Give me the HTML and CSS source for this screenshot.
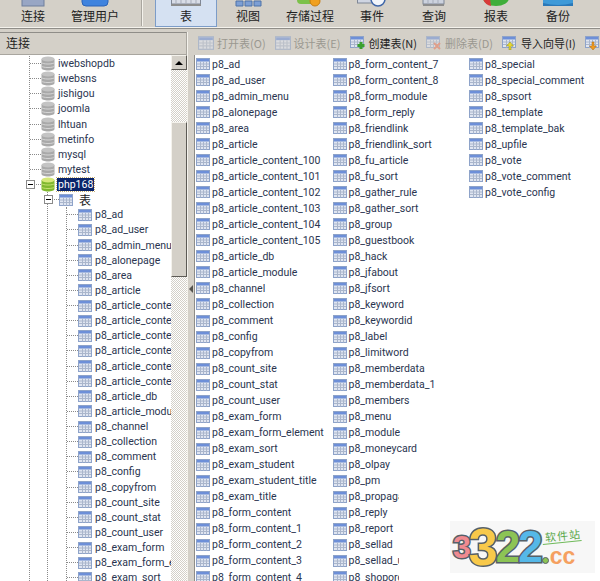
FILE: index.html
```html
<!DOCTYPE html>
<html lang="zh">
<head>
<meta charset="utf-8">
<title>Navicat</title>
<link rel="stylesheet" href="styles.css">
</head>
<body>
<svg class="defs" width="0" height="0">
  <symbol id="tbl" viewBox="0 0 14 12">
    <rect x="0.5" y="0.5" width="13" height="11" fill="#dfe5f1" stroke="#8ea3c9"/>
    <rect x="1" y="1" width="12" height="2.5" fill="#6d8fd8"/>
    <path d="M1 6h12M1 8.500h12M4.500 3.500v8M7.500 3.500v8M10.500 3.500v8" stroke="#aab6cc" stroke-width="1" fill="none"/>
  </symbol>
  <symbol id="db" viewBox="0 0 14 15">
    <path d="M0.500 3v9c0 1.500 3 2.500 6.500 2.500s6.500-1 6.500-2.500V3z" fill="#a9a9a9"/>
    <ellipse cx="7" cy="3" rx="6.500" ry="2.500" fill="#c4c4c4"/>
    <path d="M0.500 6.500c1 2 12 2 13 0M0.500 10c1 2 12 2 13 0" stroke="#d6d6d6" fill="none"/>
  </symbol>
  <symbol id="dbon" viewBox="0 0 14 15">
    <path d="M0.500 3v9c0 1.500 3 2.500 6.500 2.500s6.500-1 6.500-2.500V3z" fill="#7fb82e"/>
    <ellipse cx="7" cy="3" rx="6.500" ry="2.500" fill="#d6e87a"/>
    <path d="M0.500 6.500c1 2 12 2 13 0M0.500 10c1 2 12 2 13 0" stroke="#c4e070" fill="none"/>
  </symbol>
</svg>

<header class="main-bar">
  <div class="tool">
    <svg class="tool-icon" viewBox="0 0 30 7"><rect x="4" y="-6" width="22" height="12" fill="#98a6c4" stroke="#6f7f9c"/></svg>
    <span>连接</span>
  </div>
  <div class="tool">
    <svg class="tool-icon" viewBox="0 0 30 7"><rect x="2" y="-8" width="26" height="14" rx="4" fill="#3f83de" stroke="#2a63b8"/></svg>
    <span>管理用户</span>
  </div>
  <div class="tool-sep"></div>
  <div class="tool is-active">
    <svg class="tool-icon" viewBox="0 0 30 7"><rect x="0.500" y="-6" width="29" height="10" fill="#d8dce6" stroke="#7f8796"/><path d="M0 5h30" stroke="#8d8d8d" stroke-width="2"/><path d="M5 -1v5M10 -1v5M15 -1v5M20 -1v5M25 -1v5" stroke="#a7adba"/></svg>
    <span>表</span>
  </div>
  <div class="tool">
    <svg class="tool-icon" viewBox="0 0 30 7"><path d="M3 1h7v5H3zM12 1h7v5h-7zM21 1h7v5h-7z" fill="#7d9fd4" stroke="#4f72a8"/></svg>
    <span>视图</span>
  </div>
  <div class="tool">
    <svg class="tool-icon" viewBox="0 0 30 7"><rect x="2" y="-6" width="20" height="10" rx="4" fill="#7cc14a"/><circle cx="20" cy="1" r="5" fill="#f0a020" stroke="#c87c10"/></svg>
    <span>存储过程</span>
  </div>
  <div class="tool">
    <svg class="tool-icon" viewBox="0 0 30 7"><rect x="0.500" y="-6" width="22" height="9" fill="#cfd5e2" stroke="#7f8796"/><circle cx="21" cy="-1" r="7" fill="#f2f5fa" stroke="#3f66a8" stroke-width="1.500"/></svg>
    <span>事件</span>
  </div>
  <div class="tool">
    <svg class="tool-icon" viewBox="0 0 30 7"><rect x="4" y="-6" width="21" height="10" fill="#ccd2de" stroke="#7f8796"/><path d="M4 5h21" stroke="#8d8d8d" stroke-width="2"/><path d="M9 -1v5M14 -1v5M19 -1v5" stroke="#a7adba"/></svg>
    <span>查询</span>
  </div>
  <div class="tool">
    <svg class="tool-icon" viewBox="0 0 30 7"><ellipse cx="15" cy="-2" rx="13" ry="8" fill="#3fae3a"/><path d="M2 -1q2 6 8 7l-1-7z" fill="#d83a3a"/></svg>
    <span>报表</span>
  </div>
  <div class="tool">
    <svg class="tool-icon" viewBox="0 0 30 7"><rect x="0" y="-8" width="30" height="14" rx="3" fill="#3f9ad8"/><path d="M0 3q15 4 30 0v3H0z" fill="#2a78b8"/></svg>
    <span>备份</span>
  </div>
</header>

<main class="workspace">
  <aside class="left">
    <div class="left-title">连接</div>
    <div class="left-body">
      <div class="tree">
        <div class="branch branch-db">
          <div class="node"><i class="dash"></i><svg class="ico"><use href="#db"/></svg><span class="lbl">iwebshopdb</span></div>
          <div class="node"><i class="dash"></i><svg class="ico"><use href="#db"/></svg><span class="lbl">iwebsns</span></div>
          <div class="node"><i class="dash"></i><svg class="ico"><use href="#db"/></svg><span class="lbl">jishigou</span></div>
          <div class="node"><i class="dash"></i><svg class="ico"><use href="#db"/></svg><span class="lbl">joomla</span></div>
          <div class="node"><i class="dash"></i><svg class="ico"><use href="#db"/></svg><span class="lbl">lhtuan</span></div>
          <div class="node"><i class="dash"></i><svg class="ico"><use href="#db"/></svg><span class="lbl">metinfo</span></div>
          <div class="node"><i class="dash"></i><svg class="ico"><use href="#db"/></svg><span class="lbl">mysql</span></div>
          <div class="node"><i class="dash"></i><svg class="ico"><use href="#db"/></svg><span class="lbl">mytest</span></div>
          <div class="node"><i class="dash"></i><b class="exp"></b><svg class="ico"><use href="#dbon"/></svg><span class="lbl is-selected">php168</span></div>
          <div class="branch branch-group">
            <div class="node"><i class="dash dash-group"></i><b class="exp exp-group"></b><svg class="ico ico-tbl"><use href="#tbl"/></svg><span class="lbl lbl-cjk">表</span></div>
            <div class="branch branch-tables">
              <div class="node"><i class="dash"></i><svg class="ico ico-tbl"><use href="#tbl"/></svg><span class="lbl">p8_ad</span></div>
              <div class="node"><i class="dash"></i><svg class="ico ico-tbl"><use href="#tbl"/></svg><span class="lbl">p8_ad_user</span></div>
              <div class="node"><i class="dash"></i><svg class="ico ico-tbl"><use href="#tbl"/></svg><span class="lbl">p8_admin_menu</span></div>
              <div class="node"><i class="dash"></i><svg class="ico ico-tbl"><use href="#tbl"/></svg><span class="lbl">p8_alonepage</span></div>
              <div class="node"><i class="dash"></i><svg class="ico ico-tbl"><use href="#tbl"/></svg><span class="lbl">p8_area</span></div>
              <div class="node"><i class="dash"></i><svg class="ico ico-tbl"><use href="#tbl"/></svg><span class="lbl">p8_article</span></div>
              <div class="node"><i class="dash"></i><svg class="ico ico-tbl"><use href="#tbl"/></svg><span class="lbl">p8_article_content_100</span></div>
              <div class="node"><i class="dash"></i><svg class="ico ico-tbl"><use href="#tbl"/></svg><span class="lbl">p8_article_content_101</span></div>
              <div class="node"><i class="dash"></i><svg class="ico ico-tbl"><use href="#tbl"/></svg><span class="lbl">p8_article_content_102</span></div>
              <div class="node"><i class="dash"></i><svg class="ico ico-tbl"><use href="#tbl"/></svg><span class="lbl">p8_article_content_103</span></div>
              <div class="node"><i class="dash"></i><svg class="ico ico-tbl"><use href="#tbl"/></svg><span class="lbl">p8_article_content_104</span></div>
              <div class="node"><i class="dash"></i><svg class="ico ico-tbl"><use href="#tbl"/></svg><span class="lbl">p8_article_content_105</span></div>
              <div class="node"><i class="dash"></i><svg class="ico ico-tbl"><use href="#tbl"/></svg><span class="lbl">p8_article_db</span></div>
              <div class="node"><i class="dash"></i><svg class="ico ico-tbl"><use href="#tbl"/></svg><span class="lbl">p8_article_module</span></div>
              <div class="node"><i class="dash"></i><svg class="ico ico-tbl"><use href="#tbl"/></svg><span class="lbl">p8_channel</span></div>
              <div class="node"><i class="dash"></i><svg class="ico ico-tbl"><use href="#tbl"/></svg><span class="lbl">p8_collection</span></div>
              <div class="node"><i class="dash"></i><svg class="ico ico-tbl"><use href="#tbl"/></svg><span class="lbl">p8_comment</span></div>
              <div class="node"><i class="dash"></i><svg class="ico ico-tbl"><use href="#tbl"/></svg><span class="lbl">p8_config</span></div>
              <div class="node"><i class="dash"></i><svg class="ico ico-tbl"><use href="#tbl"/></svg><span class="lbl">p8_copyfrom</span></div>
              <div class="node"><i class="dash"></i><svg class="ico ico-tbl"><use href="#tbl"/></svg><span class="lbl">p8_count_site</span></div>
              <div class="node"><i class="dash"></i><svg class="ico ico-tbl"><use href="#tbl"/></svg><span class="lbl">p8_count_stat</span></div>
              <div class="node"><i class="dash"></i><svg class="ico ico-tbl"><use href="#tbl"/></svg><span class="lbl">p8_count_user</span></div>
              <div class="node"><i class="dash"></i><svg class="ico ico-tbl"><use href="#tbl"/></svg><span class="lbl">p8_exam_form</span></div>
              <div class="node"><i class="dash"></i><svg class="ico ico-tbl"><use href="#tbl"/></svg><span class="lbl">p8_exam_form_element</span></div>
              <div class="node"><i class="dash"></i><svg class="ico ico-tbl"><use href="#tbl"/></svg><span class="lbl">p8_exam_sort</span></div>
            </div>
          </div>
        </div>
      </div>
      <div class="scrollbar">
        <div class="sb-btn"><i class="sb-up"></i></div>
        <div class="sb-track"></div>
        <div class="sb-thumb"></div>
        <div class="sb-track sb-track-rest"></div>
      </div>
    </div>
  </aside>

  <div class="splitter"><i class="split-arrow"></i></div>

  <section class="right">
    <div class="obj-bar">
      <div class="obj-btn is-off"><svg class="obj-ico"><use href="#tbl"/></svg>打开表(O)</div>
      <div class="obj-btn is-off"><svg class="obj-ico"><use href="#tbl"/></svg>设计表(E)</div>
      <div class="obj-btn"><svg class="obj-ico" viewBox="0 0 16 14"><use href="#tbl" width="14" height="12"/><path d="M11 6v7M7.500 9.500h7" stroke="#3aa030" stroke-width="3"/></svg>创建表(N)</div>
      <div class="obj-btn is-off"><svg class="obj-ico" viewBox="0 0 16 14"><use href="#tbl" width="14" height="12"/><path d="M8 7l6 6M14 7l-6 6" stroke="#e8785a" stroke-width="2"/></svg>删除表(D)</div>
      <div class="obj-btn"><svg class="obj-ico" viewBox="0 0 16 14"><use href="#tbl" width="14" height="12"/><path d="M7 14v-4H4.500L8 6l3.500 4H9v4z" fill="#e8d830" stroke="#8a8a20" stroke-width=".5"/></svg>导入向导(I)</div>
      <div class="obj-btn"><svg class="obj-ico" viewBox="0 0 16 14"><use href="#tbl" width="14" height="12"/><path d="M7 6v4H4.500L8 14l3.500-4H9V6z" fill="#f09a20" stroke="#a86a10" stroke-width=".5"/></svg>导出向导(X)</div>
    </div>
    <div class="list">
      <div class="list-col">
        <div class="item"><svg class="ico-tbl"><use href="#tbl"/></svg><span>p8_ad</span></div>
        <div class="item"><svg class="ico-tbl"><use href="#tbl"/></svg><span>p8_ad_user</span></div>
        <div class="item"><svg class="ico-tbl"><use href="#tbl"/></svg><span>p8_admin_menu</span></div>
        <div class="item"><svg class="ico-tbl"><use href="#tbl"/></svg><span>p8_alonepage</span></div>
        <div class="item"><svg class="ico-tbl"><use href="#tbl"/></svg><span>p8_area</span></div>
        <div class="item"><svg class="ico-tbl"><use href="#tbl"/></svg><span>p8_article</span></div>
        <div class="item"><svg class="ico-tbl"><use href="#tbl"/></svg><span>p8_article_content_100</span></div>
        <div class="item"><svg class="ico-tbl"><use href="#tbl"/></svg><span>p8_article_content_101</span></div>
        <div class="item"><svg class="ico-tbl"><use href="#tbl"/></svg><span>p8_article_content_102</span></div>
        <div class="item"><svg class="ico-tbl"><use href="#tbl"/></svg><span>p8_article_content_103</span></div>
        <div class="item"><svg class="ico-tbl"><use href="#tbl"/></svg><span>p8_article_content_104</span></div>
        <div class="item"><svg class="ico-tbl"><use href="#tbl"/></svg><span>p8_article_content_105</span></div>
        <div class="item"><svg class="ico-tbl"><use href="#tbl"/></svg><span>p8_article_db</span></div>
        <div class="item"><svg class="ico-tbl"><use href="#tbl"/></svg><span>p8_article_module</span></div>
        <div class="item"><svg class="ico-tbl"><use href="#tbl"/></svg><span>p8_channel</span></div>
        <div class="item"><svg class="ico-tbl"><use href="#tbl"/></svg><span>p8_collection</span></div>
        <div class="item"><svg class="ico-tbl"><use href="#tbl"/></svg><span>p8_comment</span></div>
        <div class="item"><svg class="ico-tbl"><use href="#tbl"/></svg><span>p8_config</span></div>
        <div class="item"><svg class="ico-tbl"><use href="#tbl"/></svg><span>p8_copyfrom</span></div>
        <div class="item"><svg class="ico-tbl"><use href="#tbl"/></svg><span>p8_count_site</span></div>
        <div class="item"><svg class="ico-tbl"><use href="#tbl"/></svg><span>p8_count_stat</span></div>
        <div class="item"><svg class="ico-tbl"><use href="#tbl"/></svg><span>p8_count_user</span></div>
        <div class="item"><svg class="ico-tbl"><use href="#tbl"/></svg><span>p8_exam_form</span></div>
        <div class="item"><svg class="ico-tbl"><use href="#tbl"/></svg><span>p8_exam_form_element</span></div>
        <div class="item"><svg class="ico-tbl"><use href="#tbl"/></svg><span>p8_exam_sort</span></div>
        <div class="item"><svg class="ico-tbl"><use href="#tbl"/></svg><span>p8_exam_student</span></div>
        <div class="item"><svg class="ico-tbl"><use href="#tbl"/></svg><span>p8_exam_student_title</span></div>
        <div class="item"><svg class="ico-tbl"><use href="#tbl"/></svg><span>p8_exam_title</span></div>
        <div class="item"><svg class="ico-tbl"><use href="#tbl"/></svg><span>p8_form_content</span></div>
        <div class="item"><svg class="ico-tbl"><use href="#tbl"/></svg><span>p8_form_content_1</span></div>
        <div class="item"><svg class="ico-tbl"><use href="#tbl"/></svg><span>p8_form_content_2</span></div>
        <div class="item"><svg class="ico-tbl"><use href="#tbl"/></svg><span>p8_form_content_3</span></div>
        <div class="item"><svg class="ico-tbl"><use href="#tbl"/></svg><span>p8_form_content_4</span></div>
      </div>
      <div class="list-col">
        <div class="item"><svg class="ico-tbl"><use href="#tbl"/></svg><span>p8_form_content_7</span></div>
        <div class="item"><svg class="ico-tbl"><use href="#tbl"/></svg><span>p8_form_content_8</span></div>
        <div class="item"><svg class="ico-tbl"><use href="#tbl"/></svg><span>p8_form_module</span></div>
        <div class="item"><svg class="ico-tbl"><use href="#tbl"/></svg><span>p8_form_reply</span></div>
        <div class="item"><svg class="ico-tbl"><use href="#tbl"/></svg><span>p8_friendlink</span></div>
        <div class="item"><svg class="ico-tbl"><use href="#tbl"/></svg><span>p8_friendlink_sort</span></div>
        <div class="item"><svg class="ico-tbl"><use href="#tbl"/></svg><span>p8_fu_article</span></div>
        <div class="item"><svg class="ico-tbl"><use href="#tbl"/></svg><span>p8_fu_sort</span></div>
        <div class="item"><svg class="ico-tbl"><use href="#tbl"/></svg><span>p8_gather_rule</span></div>
        <div class="item"><svg class="ico-tbl"><use href="#tbl"/></svg><span>p8_gather_sort</span></div>
        <div class="item"><svg class="ico-tbl"><use href="#tbl"/></svg><span>p8_group</span></div>
        <div class="item"><svg class="ico-tbl"><use href="#tbl"/></svg><span>p8_guestbook</span></div>
        <div class="item"><svg class="ico-tbl"><use href="#tbl"/></svg><span>p8_hack</span></div>
        <div class="item"><svg class="ico-tbl"><use href="#tbl"/></svg><span>p8_jfabout</span></div>
        <div class="item"><svg class="ico-tbl"><use href="#tbl"/></svg><span>p8_jfsort</span></div>
        <div class="item"><svg class="ico-tbl"><use href="#tbl"/></svg><span>p8_keyword</span></div>
        <div class="item"><svg class="ico-tbl"><use href="#tbl"/></svg><span>p8_keywordid</span></div>
        <div class="item"><svg class="ico-tbl"><use href="#tbl"/></svg><span>p8_label</span></div>
        <div class="item"><svg class="ico-tbl"><use href="#tbl"/></svg><span>p8_limitword</span></div>
        <div class="item"><svg class="ico-tbl"><use href="#tbl"/></svg><span>p8_memberdata</span></div>
        <div class="item"><svg class="ico-tbl"><use href="#tbl"/></svg><span>p8_memberdata_1</span></div>
        <div class="item"><svg class="ico-tbl"><use href="#tbl"/></svg><span>p8_members</span></div>
        <div class="item"><svg class="ico-tbl"><use href="#tbl"/></svg><span>p8_menu</span></div>
        <div class="item"><svg class="ico-tbl"><use href="#tbl"/></svg><span>p8_module</span></div>
        <div class="item"><svg class="ico-tbl"><use href="#tbl"/></svg><span>p8_moneycard</span></div>
        <div class="item"><svg class="ico-tbl"><use href="#tbl"/></svg><span>p8_olpay</span></div>
        <div class="item"><svg class="ico-tbl"><use href="#tbl"/></svg><span>p8_pm</span></div>
        <div class="item"><svg class="ico-tbl"><use href="#tbl"/></svg><span>p8_propaganda</span></div>
        <div class="item"><svg class="ico-tbl"><use href="#tbl"/></svg><span>p8_reply</span></div>
        <div class="item"><svg class="ico-tbl"><use href="#tbl"/></svg><span>p8_report</span></div>
        <div class="item"><svg class="ico-tbl"><use href="#tbl"/></svg><span>p8_sellad</span></div>
        <div class="item"><svg class="ico-tbl"><use href="#tbl"/></svg><span>p8_sellad_user</span></div>
        <div class="item"><svg class="ico-tbl"><use href="#tbl"/></svg><span>p8_shoporder</span></div>
      </div>
      <div class="list-col">
        <div class="item"><svg class="ico-tbl"><use href="#tbl"/></svg><span>p8_special</span></div>
        <div class="item"><svg class="ico-tbl"><use href="#tbl"/></svg><span>p8_special_comment</span></div>
        <div class="item"><svg class="ico-tbl"><use href="#tbl"/></svg><span>p8_spsort</span></div>
        <div class="item"><svg class="ico-tbl"><use href="#tbl"/></svg><span>p8_template</span></div>
        <div class="item"><svg class="ico-tbl"><use href="#tbl"/></svg><span>p8_template_bak</span></div>
        <div class="item"><svg class="ico-tbl"><use href="#tbl"/></svg><span>p8_upfile</span></div>
        <div class="item"><svg class="ico-tbl"><use href="#tbl"/></svg><span>p8_vote</span></div>
        <div class="item"><svg class="ico-tbl"><use href="#tbl"/></svg><span>p8_vote_comment</span></div>
        <div class="item"><svg class="ico-tbl"><use href="#tbl"/></svg><span>p8_vote_config</span></div>
      </div>
    </div>
  </section>
</main>

<div class="mark">
  <span class="mark-num"><span class="n1">3</span><span class="n2">3</span><span class="n3">2</span><span class="n4">2</span></span>
  <span class="mark-side">
    <span class="mark-cn">软件站</span>
    <span class="mark-cc"><i class="dot"></i>cc</span>
  </span>
</div>
</body>
</html>
```
FILE: styles.css
```css
* { box-sizing: border-box; }
html, body { margin: 0; height: 100%; }
body {
  width: 600px;
  height: 581px;
  overflow: hidden;
  background: #d4d0c8;
  color: #2a3550;
  font: 10.500px/15px Roboto, "Liberation Sans", "Noto Sans CJK SC", sans-serif;
  display: flex;
  flex-direction: column;
  position: relative;
}
.defs { position: absolute; }

.main-bar {
  height: 29px;
  flex: none;
  display: flex;
  border-bottom: 1px solid #8f8d88;
  box-shadow: inset 0 -1px 0 #f4f2ec;
  padding-left: 2px;
  color: #222;
}
.tool {
  width: 62px;
  height: 27px;
  flex: none;
  display: flex;
  flex-direction: column;
  align-items: center;
  font: 12px/14px "Noto Sans CJK SC", sans-serif;
}
.tool-icon { width: 30px; height: 7px; flex: none; margin-bottom: 2px; }
.tool-sep {
  width: 2px;
  height: 26px;
  margin: 0 12px 0 15px;
  flex: none;
  background: #a9a69f;
  border-right: 1px solid #f4f2ec;
}
.tool.is-active {
  background: #d5e1f2;
  border: 1px solid #7c9cc8;
  border-top: 0;
}

.workspace { flex: 1; display: flex; min-height: 0; padding-top: 3px; }

.left { width: 187px; flex: none; display: flex; flex-direction: column; }
.left-title {
  height: 23px;
  flex: none;
  padding: 2px 0 0 6px;
  border: 1px solid #a9a69f;
  border-left: 0;
  border-top-color: #8f8d88;
  font: 12px/16px "Noto Sans CJK SC", sans-serif;
  color: #222;
}
.left-body { flex: 1; min-height: 0; display: flex; background: #fff; }
.tree { width: 171px; flex: none; overflow: hidden; padding-top: 1px; }
.branch { border-left: 1px dotted #8a8a8a; }
.branch-db { margin-left: 29px; }
.branch-group { margin-left: 17px; }
.branch-tables { margin-left: 18px; }
.node {
  height: 15.125px;
  display: flex;
  align-items: center;
  position: relative;
  white-space: nowrap;
}
.dash { width: 11px; flex: none; border-top: 1px dotted #8a8a8a; }
.ico { width: 14px; height: 15px; flex: none; }
.ico-tbl { width: 14px; height: 12px; flex: none; }
.lbl { margin-left: 2px; padding: 0 1px; line-height: 13px; }
.lbl-cjk { margin-left: 5px; font-family: "Noto Sans CJK SC", sans-serif; font-size: 12px; color: #222; }
.is-selected {
  background: #0a246a;
  color: #fff;
  outline: 1px dotted #c8b070;
}
.exp {
  position: absolute;
  left: -4px;
  top: 3px;
  width: 9px;
  height: 9px;
  background: #fff linear-gradient(#000, #000) center / 5px 1px no-repeat;
  border: 1px solid #8a8a8a;
}

.scrollbar {
  width: 16px;
  flex: none;
  display: flex;
  flex-direction: column;
  background: #ece9e2;
}
.sb-btn, .sb-thumb {
  background: #d4d0c8;
  border: 1px solid;
  border-color: #f4f2ec #5c5a55 #5c5a55 #f4f2ec;
}
.sb-btn { height: 15px; flex: none; display: flex; align-items: center; justify-content: center; }
.sb-up {
  width: 0;
  height: 0;
  border: 4px solid transparent;
  border-top: 0;
  border-bottom-color: #000;
}
.sb-thumb { height: 155px; flex: none; }
.sb-track {
  height: 52px;
  flex: none;
  background: repeating-conic-gradient(#fff 0 25%, #d4d0c8 0 50%) 0 0 / 2px 2px;
}
.sb-track-rest { flex: 1; }

.splitter {
  width: 7px;
  flex: none;
  display: flex;
  align-items: center;
  justify-content: center;
  padding-bottom: 36px;
  border-left: 1px solid #f4f2ec;
}
.split-arrow {
  width: 0;
  height: 0;
  border: 4px solid transparent;
  border-left: 0;
  border-right-color: #55534e;
}

.right { flex: 1; min-width: 0; display: flex; flex-direction: column; }
.obj-bar {
  height: 23px;
  flex: none;
  display: flex;
  align-items: center;
  gap: 9px;
  padding: 0 0 2px 4px;
  white-space: nowrap;
  overflow: hidden;
  font: 11px/14px "Noto Sans CJK SC", sans-serif;
  color: #222;
}
.obj-btn { display: flex; align-items: center; gap: 3px; flex: none; }
.obj-btn.is-off { color: #9a9890; }
.is-off .obj-ico { opacity: .55; }
.obj-ico { width: 16px; height: 14px; flex: none; }

.list {
  flex: 1;
  min-height: 0;
  overflow: hidden;
  background: #fff;
  border-left: 1px solid #8f8d88;
  display: flex;
  padding: 1px 0 0 1px;
}
.list-col { width: 136.500px; flex: none; }
.item {
  height: 16.040px;
  display: flex;
  align-items: center;
  gap: 2px;
  white-space: nowrap;
  overflow: hidden;
}
.list-col:nth-child(2) .item:nth-child(n+28) { width: 66px; }

.mark {
  position: absolute;
  left: 450px;
  top: 521px;
  width: 145px;
  height: 52px;
  background: #f7f7f7;
  display: flex;
  align-items: center;
  padding-left: 3px;
  overflow: hidden;
}
.mark-num {
  font: 900 44px/50px "Liberation Sans", sans-serif;
  -webkit-text-stroke: 3px #566068;
  paint-order: stroke fill;
  display: flex;
  align-items: center;
  letter-spacing: -2px;
  flex: none;
}
.n1 { color: #f08a90; font-size: 32px; }
.n2 { color: #f8c94a; font-size: 52px; }
.n3 { color: #8cc455; }
.n4 { color: #55b8e8; }
.mark-side { display: flex; flex-direction: column; margin-left: 1px; flex: none; }
.mark-cn {
  font: 11px/14px "Noto Sans CJK SC", sans-serif;
  color: #5aa84a;
  letter-spacing: 1px;
  padding-left: 3px;
  border-bottom: 1px solid #6fba5a;
  transform: rotate(-6deg);
}
.mark-cc {
  font: 700 23px/20px "Liberation Sans", sans-serif;
  color: #f5a060;
  display: flex;
  align-items: center;
  gap: 1px;
  margin-top: 3px;
}
.dot { width: 7px; height: 7px; margin-top: 8px; border-radius: 50%; background: #8cc455; border: 1px solid #566068; }
```
